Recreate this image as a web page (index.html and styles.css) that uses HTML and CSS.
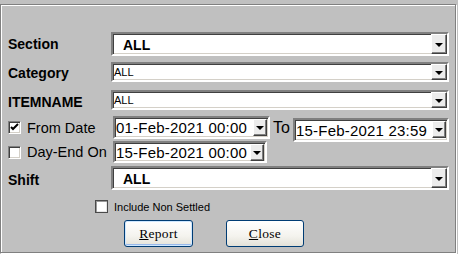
FILE: index.html
```html
<!DOCTYPE html>
<html lang="en">

<head>
  <meta charset="UTF-8">
  <title>Report Filter</title>
  <link rel="stylesheet" href="styles.css">
</head>

<body>
<div class="frame">
  <div class="form">
    <div class="row row-big">
      <label class="label">Section</label>
      <div class="combo combo-big">
        <span class="combo-text">ALL</span>
        <span class="drop"><i class="arrow"></i></span>
      </div>
    </div>

    <div class="row row-small">
      <label class="label lbl-down1">Category</label>
      <div class="combo combo-small">
        <span class="combo-text">ALL</span>
        <span class="drop"><i class="arrow"></i></span>
      </div>
    </div>

    <div class="row row-small row-item">
      <label class="label lbl-down2">ITEMNAME</label>
      <div class="combo combo-small">
        <span class="combo-text">ALL</span>
        <span class="drop"><i class="arrow"></i></span>
      </div>
    </div>

    <div class="row row-date row-from">
      <label class="label label-check">
        <span class="check">
          <svg width="9" height="9" viewBox="0 0 9 9"><path d="M1 4 L3 6 L8 1" fill="none" stroke="#000" stroke-width="2"/></svg>
        </span>
        From Date
      </label>
      <div class="picker picker-from">
        <span class="picker-text">01-Feb-2021 00:00</span>
        <span class="drop drop-date"><i class="arrow"></i></span>
      </div>
      <span class="to">To</span>
      <div class="picker picker-to">
        <span class="picker-text">15-Feb-2021 23:59</span>
        <span class="drop drop-date"><i class="arrow"></i></span>
      </div>
    </div>

    <div class="row row-date row-dayend">
      <label class="label label-check">
        <span class="check"></span>
        Day-End On
      </label>
      <div class="picker picker-dayend">
        <span class="picker-text">15-Feb-2021 00:00</span>
        <span class="drop drop-date"><i class="arrow"></i></span>
      </div>
    </div>

    <div class="row row-big row-shift">
      <label class="label lbl-down2">Shift</label>
      <div class="combo combo-big">
        <span class="combo-text">ALL</span>
        <span class="drop"><i class="arrow"></i></span>
      </div>
    </div>

    <div class="settled">
      <span class="xp-check"></span>
      <span>Include Non Settled</span>
    </div>

    <div class="buttons">
      <button class="btn btn-report"><u>R</u>eport</button>
      <button class="btn btn-close"><u>C</u>lose</button>
    </div>
  </div>
</div>
</body>

</html>
```

FILE: styles.css
```css
* {
  box-sizing: border-box;
}

body {
  margin: 0;
  background-color: #c0c0c0;
  font-family: "Liberation Sans", Arial, sans-serif;
  color: #000;
  width: 458px;
  height: 254px;
  overflow: hidden;
}

.frame {
  margin-top: 4px;
  width: 456px;
  height: 249px;
  border: 1px solid #808080;
  box-shadow: inset 1px 1px 0 #fff, 1px 1px 0 #fff;
}

.form {
  padding: 27px 0 0 7px;
}

.row {
  display: flex;
  align-items: center;
}

.row-big {
  height: 24px;
}

.row-small {
  height: 20px;
  margin-top: 6px;
}

.row-item {
  margin-top: 8px;
}

.label {
  width: 103px;
  font-size: 14px;
  font-weight: bold;
  white-space: nowrap;
}

.lbl-down1 {
  padding-top: 2px;
}

.lbl-down2 {
  padding-top: 4px;
}

/* sunken 3d edge used by combos and pickers */
.combo, .picker {
  display: flex;
  align-items: center;
  background-color: #fff;
  border: 2px solid;
  border-color: #808080 #fff #fff #808080;
  box-shadow: inset 1px 1px 0 #404040, inset -1px -1px 0 #d4d0c8;
}

.combo {
  width: 338px;
}

.combo-big {
  height: 24px;
}

.combo-small {
  height: 20px;
}

.combo-text {
  flex: 1;
}

.combo-big .combo-text {
  padding-left: 10px;
  font-size: 14px;
  font-weight: bold;
  padding-top: 1px;
}

.combo-small .combo-text {
  padding-left: 1px;
  font-size: 11px;
}

.drop {
  display: flex;
  align-items: center;
  justify-content: center;
  width: 16px;
  height: 100%;
  background-color: #ececec;
  border: 1px solid;
  border-color: #fff #404040 #404040 #fff;
  box-shadow: inset -1px -1px 0 #808080;
}

.arrow {
  display: block;
  width: 0;
  height: 0;
  border-left: 4px solid transparent;
  border-right: 4px solid transparent;
  border-top: 4px solid #000;
  margin-top: 1px;
}

.row-date {
  align-items: flex-start;
}

.row-from {
  margin-top: 6px;
  height: 23px;
}

.row-dayend {
  margin-top: 2px;
  height: 22px;
}

.label-check {
  display: flex;
  align-items: center;
  gap: 6px;
  width: 105px;
  height: 100%;
  font-size: 14.5px;
  font-weight: normal;
}

.check {
  display: flex;
  align-items: center;
  justify-content: center;
  width: 13px;
  height: 13px;
  background-color: #fff;
  border: 1px solid;
  border-color: #808080 #fff #fff #808080;
  box-shadow: inset 1px 1px 0 #404040, inset -1px -1px 0 #d4d0c8;
}

.picker {
  padding-left: 1px;
}

.picker-text {
  flex: 1;
  font-size: 15px;
  letter-spacing: 0.2px;
  white-space: nowrap;
}

.picker-from {
  width: 157px;
  height: 23px;
}

.picker-dayend {
  width: 154px;
  height: 22px;
}

.picker-to {
  width: 156px;
  height: 24px;
  margin-top: 2px;
}

.drop-date {
  width: 14px;
  height: 17px;
  align-self: flex-start;
  margin-top: 1px;
  margin-right: 1px;
}

.to {
  width: 23px;
  padding-left: 3px;
  font-size: 16px;
  line-height: 23px;
}

.row-shift {
  margin-top: 3px;
}

.settled {
  display: flex;
  align-items: center;
  gap: 6px;
  margin-top: 10px;
  padding-left: 87px;
  height: 13px;
  font-size: 11px;
}

.xp-check {
  width: 13px;
  height: 13px;
  background-color: #fff;
  border: 1px solid #4a4a4a;
  box-shadow: inset 1px 1px 0 #9a9a9a, inset -1px -1px 0 #e6e6e6;
}

.buttons {
  display: flex;
  gap: 33px;
  margin-top: 7px;
  padding-left: 116px;
}

.btn {
  height: 27px;
  padding: 0;
  border: 1px solid #003c74;
  border-radius: 3px;
  background: linear-gradient(#ffffff, #f4f3ee 60%, #e3e1d8);
  font-family: "Liberation Serif", "Times New Roman", serif;
  font-size: 13.5px;
  color: #000;
  letter-spacing: 0.3px;
}

.btn-report {
  width: 69px;
  box-shadow: inset 0 0 0 1px #cee7ff, inset 0 -2px 0 #98b8ea;
}

.btn-close {
  width: 78px;
}
```
